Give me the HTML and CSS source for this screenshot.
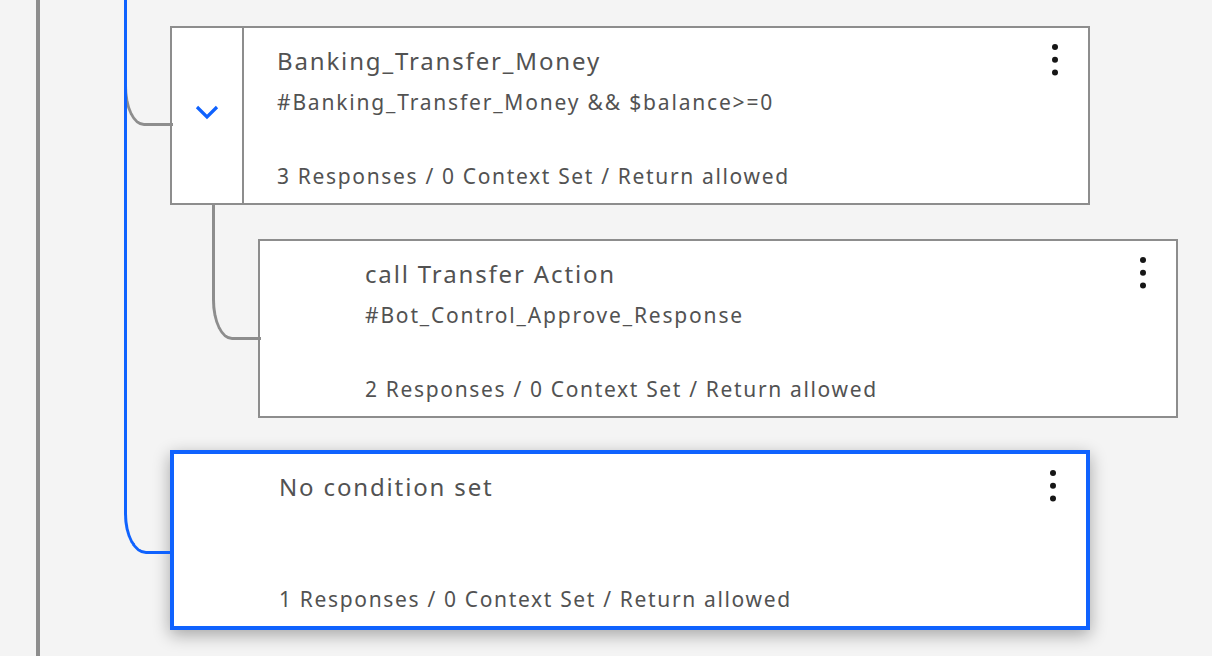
FILE: index.html
```html
<!DOCTYPE html>
<html lang="en">
<head>
<meta charset="utf-8">
<title>Dialog tree</title>
<link rel="stylesheet" href="styles.css">
</head>
<body>
<div class="root-rail"></div>
<div class="tree">
  <div class="node node--parent">
    <div class="node-toggle">
      <svg class="chevron" width="24" height="24" viewBox="0 0 24 24"><polyline points="2,7 12,17 22,7" fill="none" stroke="#0f62fe" stroke-width="3.2"/></svg>
    </div>
    <div class="node-body">
      <div class="node-title">Banking_Transfer_Money</div>
      <div class="node-condition">#Banking_Transfer_Money &amp;&amp; $balance&gt;=0</div>
      <div class="node-meta">3 Responses / 0 Context Set / Return allowed</div>
    </div>
    <div class="node-menu"><svg width="24" height="40" viewBox="0 0 24 40"><circle cx="12" cy="7" r="3"/><circle cx="12" cy="19.7" r="3"/><circle cx="12" cy="32.4" r="3"/></svg></div>
  </div>

  <div class="node node--child">
    <div class="node-toggle"></div>
    <div class="node-body">
      <div class="node-title">call Transfer Action</div>
      <div class="node-condition">#Bot_Control_Approve_Response</div>
      <div class="node-meta">2 Responses / 0 Context Set / Return allowed</div>
    </div>
    <div class="node-menu"><svg width="24" height="40" viewBox="0 0 24 40"><circle cx="12" cy="7" r="3"/><circle cx="12" cy="19.7" r="3"/><circle cx="12" cy="32.4" r="3"/></svg></div>
  </div>

  <div class="node node--selected">
    <div class="node-toggle"></div>
    <div class="node-body">
      <div class="node-title">No condition set</div>
      <div class="node-meta">1 Responses / 0 Context Set / Return allowed</div>
    </div>
    <div class="node-menu"><svg width="24" height="40" viewBox="0 0 24 40"><circle cx="12" cy="7" r="3"/><circle cx="12" cy="19.7" r="3"/><circle cx="12" cy="32.4" r="3"/></svg></div>
  </div>
</div>
</body>
</html>
```
FILE: styles.css
```css
* { box-sizing: border-box; }

html, body {
  margin: 0;
  height: 656px;
  overflow: hidden;
}

body {
  display: flex;
  background: #f4f4f4;
  font-family: "Noto Sans", "Open Sans", sans-serif;
  color: #525252;
}

.root-rail {
  margin-left: 36px;
  width: 4px;
  background: #8d8d8d;
  flex: none;
}

.tree {
  margin-left: 130px;
  padding-top: 26px;
  display: flex;
  flex-direction: column;
  align-items: flex-start;
}

.node {
  position: relative;
  display: flex;
  width: 920px;
  height: 179px;
  background: #fff;
  border: 2px solid #8d8d8d;
}

.node::before {
  content: "";
  position: absolute;
  width: 46px;
  border-left: 3px solid #8d8d8d;
  border-bottom: 3px solid #8d8d8d;
  border-bottom-left-radius: 20px 40px;
}

.node--parent::before {
  left: -48px;
  top: 31px;
  height: 64px;
}

.node--child {
  margin-top: 34px;
  margin-left: 88px;
}

.node--child::before {
  left: -48px;
  top: -36px;
  height: 132px;
}

.node--selected {
  margin-top: 32px;
  height: 180px;
  border: 4px solid #0f62fe;
  box-shadow: 0 5px 16px rgba(0, 0, 0, 0.32);
}

.node--selected::before {
  left: -50px;
  top: -554px;
  height: 651px;
  border-color: #0f62fe;
  border-bottom-left-radius: 22px 40px;
}

.node-toggle {
  flex: none;
  width: 72px;
  border-right: 2px solid transparent;
  display: flex;
  justify-content: center;
  padding-top: 72px;
}

.node--parent .node-toggle {
  border-right-color: #8d8d8d;
}

.chevron {
  display: block;
}

.node-body {
  flex: 1;
  display: flex;
  flex-direction: column;
  padding: 17px 0 13px 33px;
}

.node-title {
  font-size: 24px;
  line-height: 32px;
  letter-spacing: 1.85px;
}

.node-condition {
  margin-top: 11px;
  font-size: 21px;
  line-height: 28px;
  letter-spacing: 1.82px;
}

.node-meta {
  margin-top: auto;
  font-size: 21px;
  line-height: 28px;
  letter-spacing: 1.66px;
}

.node-menu {
  flex: none;
  margin-top: 12px;
  margin-right: 21px;
  width: 24px;
  height: 40px;
}

.node-menu svg {
  display: block;
  fill: #161616;
}
```
